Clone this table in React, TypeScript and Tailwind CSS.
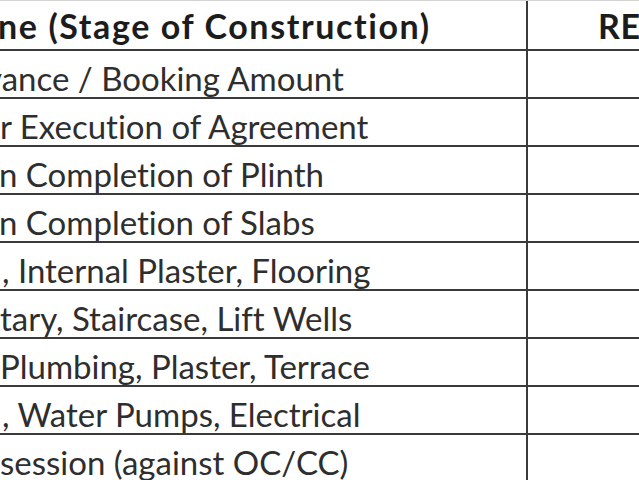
const rows = [
  { text: 'vance / Booking Amount', shift: '-ml-[15px]' },
  { text: 'r Execution of Agreement', shift: 'ml-0' },
  { text: 'n Completion of Plinth', shift: '-ml-[1px]' },
  { text: 'n Completion of Slabs', shift: '-ml-[1px]' },
  { text: ', Internal Plaster, Flooring', shift: 'ml-[2px]' },
  { text: 'tary, Staircase, Lift Wells', shift: 'ml-0' },
  { text: 'Plumbing, Plaster, Terrace', shift: 'ml-0' },
  { text: ', Water Pumps, Electrical', shift: 'ml-[2px]' },
  { text: 'session (against OC/CC)', shift: 'ml-0' },
];

export default function App() {
  return (
    <div className="w-[639px] h-[480px] overflow-hidden bg-white font-['Lato',sans-serif] text-[33px] text-[#2e2e2e] [font-variant-ligatures:none]">
      {/* header */}
      <div className="flex h-[51px] border-b-2 border-t border-b-[#3a3a3a] border-t-[#d4d4d4]">
        <div className="w-[528px] shrink-0 border-r-2 border-[#3a3a3a] pt-[5px] leading-[40px] text-[34px] tracking-[1.6px] font-bold text-[#1c1c1c] whitespace-nowrap">
          <span className="-ml-[2px]">ne (Stage of Construction)</span>
        </div>
        <div className="w-[300px] shrink-0 pl-[70px] pt-[5px] leading-[40px] text-[34px] tracking-[0.6px] font-bold text-[#1c1c1c] whitespace-nowrap">
          REMARKS
        </div>
      </div>

      {/* stages */}
      {rows.map((r, i) => (
        <div key={i} className="flex h-[48px] border-b-2 border-[#3a3a3a]">
          <div className="w-[528px] shrink-0 border-r-2 border-[#3a3a3a] pt-[8px] leading-[39px] whitespace-nowrap">
            <span className={`inline-block ${r.shift}`}>{r.text}</span>
          </div>
          <div className="w-[300px] shrink-0" />
        </div>
      ))}
    </div>
  );
}
